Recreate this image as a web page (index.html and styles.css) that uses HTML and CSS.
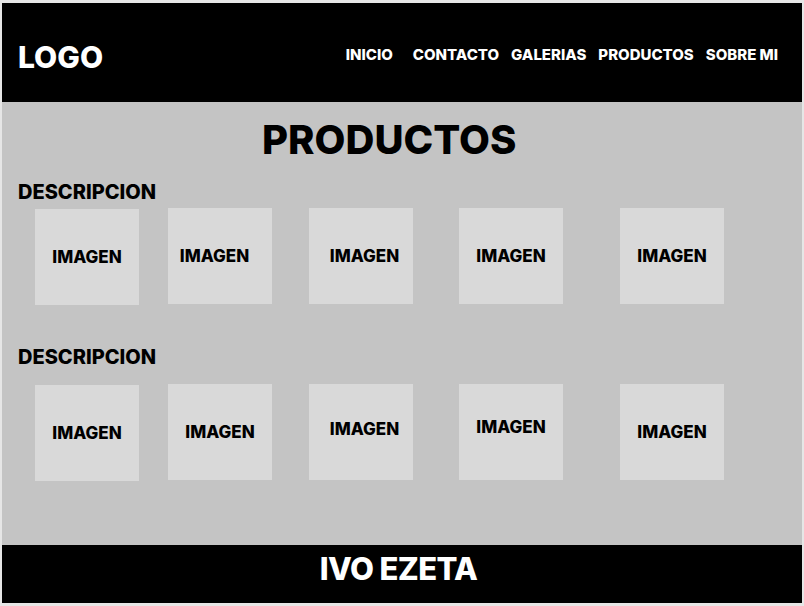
FILE: index.html
```html
<!DOCTYPE html>
<html lang="es">
<head>
  <meta charset="UTF-8" />
  <meta name="viewport" content="width=device-width, initial-scale=1.0"/>
  <title>Productos</title>
  <link rel="stylesheet" href="styles.css">
</head>
<body>

<div class="page">

  <header class="topbar">
    <div class="logo">LOGO</div>
    <nav class="menu">
      <a href="#" class="first">INICIO</a>
      <a href="#">CONTACTO</a>
      <a href="#">GALERIAS</a>
      <a href="#">PRODUCTOS</a>
      <a href="#">SOBRE MI</a>
    </nav>
  </header>

  <main class="contenido">
    <h1>PRODUCTOS</h1>

    <section class="grupo uno">
      <h2>DESCRIPCION</h2>
      <div class="fila">
        <div class="imagen baja">IMAGEN</div>
        <div class="imagen izq">IMAGEN</div>
        <div class="imagen der">IMAGEN</div>
        <div class="imagen">IMAGEN</div>
        <div class="imagen">IMAGEN</div>
      </div>
    </section>

    <section class="grupo dos">
      <h2>DESCRIPCION</h2>
      <div class="fila">
        <div class="imagen baja">IMAGEN</div>
        <div class="imagen">IMAGEN</div>
        <div class="imagen der sube">IMAGEN</div>
        <div class="imagen sube-mas">IMAGEN</div>
        <div class="imagen">IMAGEN</div>
      </div>
    </section>
  </main>

  <footer class="pie">IVO EZETA</footer>
</div>

</body>
</html>
```

FILE: styles.css
```css
:root {
  --marco: #e6e6e6;
  --negro: #000;
  --gris: #c4c4c4;
  --caja: #d9d9d9;
}
* {
  box-sizing: border-box;
}
body {
  margin: 0;
  background: var(--marco);
  font-family: Inter, 'Liberation Sans', sans-serif;
  font-weight: 800;
}
.page {
  margin: 3px 2px;
  height: 600px;
  display: flex;
  flex-direction: column;
}

/* cabecera */
.topbar {
  height: 99px;
  background: var(--negro);
  color: #fff;
  display: flex;
  align-items: center;
  justify-content: space-between;
  padding: 4px 24px 0 16px;
}
.logo {
  font-size: 30px;
  line-height: 30px;
  margin-top: 4px;
}
.menu {
  display: flex;
  gap: 12px;
}
.menu a {
  color: #fff;
  text-decoration: none;
  font-size: 15px;
  line-height: 16px;
}
.menu a.first {
  margin-right: 8px;
}

/* contenido */
.contenido {
  flex: 1;
  background: var(--gris);
  color: #000;
  padding-top: 18px;
}
h1 {
  margin: 0;
  padding-left: 260px;
  font-size: 40px;
  line-height: 40px;
  font-weight: 800;
}
h2 {
  margin: 0;
  padding-left: 16px;
  font-size: 20px;
  line-height: 20px;
  font-weight: 800;
}
.grupo.uno {
  margin-top: 22px;
}
.grupo.uno .fila {
  margin-top: 6px;
}
.grupo.dos {
  margin-top: 42px;
}
.grupo.dos .fila {
  margin-top: 17px;
}
.fila {
  display: flex;
  align-items: flex-start;
  padding-left: 33px;
}
.imagen {
  width: 104px;
  height: 96px;
  background: var(--caja);
  display: flex;
  align-items: center;
  justify-content: center;
  font-size: 17px;
}
.imagen:nth-child(2) { margin-left: 29px; }
.imagen:nth-child(3) { margin-left: 37px; }
.imagen:nth-child(4) { margin-left: 46px; }
.imagen:nth-child(5) { margin-left: 57px; }
.imagen.baja { margin-top: 1px; }
.imagen.izq { padding-right: 11px; }
.imagen.der { padding-left: 7px; }
.imagen.sube { padding-bottom: 6px; }
.imagen.sube-mas { padding-bottom: 10px; }

/* pie */
.pie {
  height: 58px;
  background: var(--negro);
  color: #fff;
  font-size: 31px;
  letter-spacing: -0.6px;
  display: flex;
  align-items: center;
  justify-content: center;
  padding: 0 7px 12px 0;
}
```
